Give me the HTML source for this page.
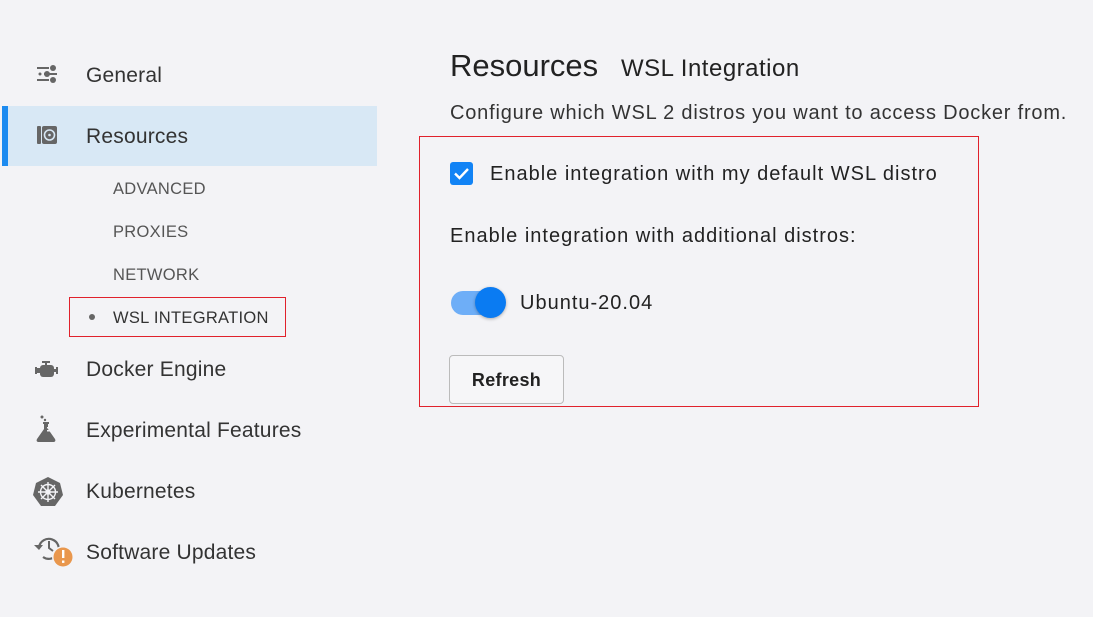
<!DOCTYPE html>
<html><head><style>
body{margin:0;width:1093px;height:617px;background:#f3f3f6;font-family:"Liberation Sans",sans-serif;color:#333;position:relative;overflow:hidden}
.a{position:absolute;white-space:nowrap}
.nav{font-size:21px;color:#333;left:86px;letter-spacing:0.2px}
.sub{font-size:16.5px;color:#555;left:113px;letter-spacing:0.3px}
.c{font-size:20px;color:#222;letter-spacing:1px}
svg{position:absolute}
</style></head><body>
<div class="a" style="left:2px;top:106px;width:375px;height:60px;background:#d8e8f5"></div>
<div class="a" style="left:2px;top:106px;width:6px;height:60px;background:#1d8bf0"></div>

<svg style="left:36px;top:64px" width="22" height="20" viewBox="0 0 22 20"><g fill="#666"><rect x="1" y="3" width="12" height="2"/><circle cx="17" cy="4" r="3"/><rect x="8" y="9" width="13" height="2"/><circle cx="4" cy="10" r="1.5"/><circle cx="11" cy="10" r="3"/><rect x="1" y="15" width="12" height="2"/><circle cx="17" cy="16" r="3"/></g></svg>
<div class="a nav" style="top:64px">General</div>

<svg style="left:36px;top:125px" width="22" height="20" viewBox="0 0 22 20"><rect x="1" y="1" width="4" height="18" rx="1" fill="#666"/><rect x="6" y="1" width="15" height="18" rx="2" fill="#666"/><circle cx="13.5" cy="10" r="5" fill="none" stroke="#d8e8f5" stroke-width="1.6"/><circle cx="13.5" cy="10" r="1.3" fill="#d8e8f5"/></svg>
<div class="a nav" style="top:125px">Resources</div>

<div class="a sub" style="top:180px">ADVANCED</div>
<div class="a sub" style="top:223px">PROXIES</div>
<div class="a sub" style="top:266px">NETWORK</div>
<div class="a" style="left:69px;top:297px;width:215px;height:38px;border:1.5px solid #e0212b"></div>
<div class="a" style="left:89px;top:314px;width:6px;height:6px;border-radius:50%;background:#666"></div>
<div class="a sub" style="top:309px;color:#333">WSL INTEGRATION</div>

<svg style="left:34px;top:360px" width="26" height="20" viewBox="0 0 26 20"><g fill="#666"><rect x="8" y="1" width="8" height="2"/><rect x="11" y="2" width="2" height="4"/><rect x="6" y="5" width="14" height="12" rx="3"/><rect x="3" y="8" width="4" height="5"/><rect x="1" y="7" width="2" height="7"/><rect x="19" y="9" width="4" height="3"/><rect x="22" y="7" width="2" height="7"/></g></svg>
<div class="a nav" style="top:358px">Docker Engine</div>

<svg style="left:34px;top:415px" width="22" height="28" viewBox="0 0 22 28"><g fill="#666"><circle cx="8" cy="2" r="1.5"/><circle cx="11" cy="5" r="1.2"/><rect x="9" y="7" width="6" height="2"/><path d="M10 8h4v6l7 10c1 2 0 3-2 3H5c-2 0-3-1-2-3l7-10z"/></g><rect x="13" y="12" width="3" height="1.5" fill="#f3f3f6"/><rect x="13" y="15" width="3" height="1.5" fill="#f3f3f6"/></svg>
<div class="a nav" style="top:419px">Experimental Features</div>

<svg style="left:31px;top:476px" width="34" height="32" viewBox="0 0 34 32"><polygon points="17,1 29,7 32,19 24,30 10,30 2,19 5,7" fill="#666"/><g stroke="#f3f3f6" stroke-width="1.4" fill="none"><circle cx="17" cy="16" r="7.5"/><circle cx="17" cy="16" r="2"/><path d="M17 6v20M7 16h20M10 9l14 14M24 9L10 23"/></g></svg>
<div class="a nav" style="top:480px">Kubernetes</div>

<svg style="left:33px;top:535px" width="42" height="36" viewBox="0 0 42 36"><path d="M6 12a10 10 0 1 1 4 10" fill="none" stroke="#666" stroke-width="2.2"/><path d="M1 10h9l-4 5z" fill="#666"/><path d="M16 6v7l4 3" fill="none" stroke="#666" stroke-width="2"/><circle cx="30" cy="22" r="11" fill="#f3f3f6"/><circle cx="30" cy="22" r="9.5" fill="#e9974d"/><rect x="29" y="15" width="2.4" height="8" fill="#fff"/><rect x="29" y="25.5" width="2.4" height="2.4" fill="#fff"/></svg>
<div class="a nav" style="top:541px">Software Updates</div>

<div class="a" style="left:450px;top:48px;font-size:31px;color:#222">Resources</div>
<div class="a" style="left:621px;top:55px;font-size:24px;color:#222;letter-spacing:0.5px">WSL Integration</div>
<div class="a c" style="left:450px;top:102px;color:#333;letter-spacing:0.8px">Configure which WSL 2 distros you want to access Docker from.</div>

<div class="a" style="left:419px;top:136px;width:558px;height:269px;border:1.5px solid #e0212b"></div>
<div class="a" style="left:450px;top:162px;width:23px;height:23px;border-radius:3px;background:#1183f5"></div>
<svg style="left:450px;top:162px" width="23" height="23" viewBox="0 0 23 23"><path d="M5 11.5l4.5 4.5 8.5-9" fill="none" stroke="#fff" stroke-width="2.4"/></svg>
<div class="a c" style="left:490px;top:163px">Enable integration with my default WSL distro</div>
<div class="a c" style="left:450px;top:225px">Enable integration with additional distros:</div>
<div class="a" style="left:451px;top:291px;width:50px;height:24px;border-radius:12px;background:#6eaef7"></div>
<div class="a" style="left:475px;top:287px;width:31px;height:31px;border-radius:50%;background:#0a7bf2;box-shadow:0 1px 3px rgba(0,0,0,.3)"></div>
<div class="a c" style="left:520px;top:292px">Ubuntu-20.04</div>
<div class="a" style="left:449px;top:355px;width:113px;height:47px;border:1px solid #bbb;border-radius:4px;background:#f6f6f8;font-size:18px;font-weight:bold;letter-spacing:0.3px;color:#222;text-align:center;line-height:49px">Refresh</div>
</body></html>
